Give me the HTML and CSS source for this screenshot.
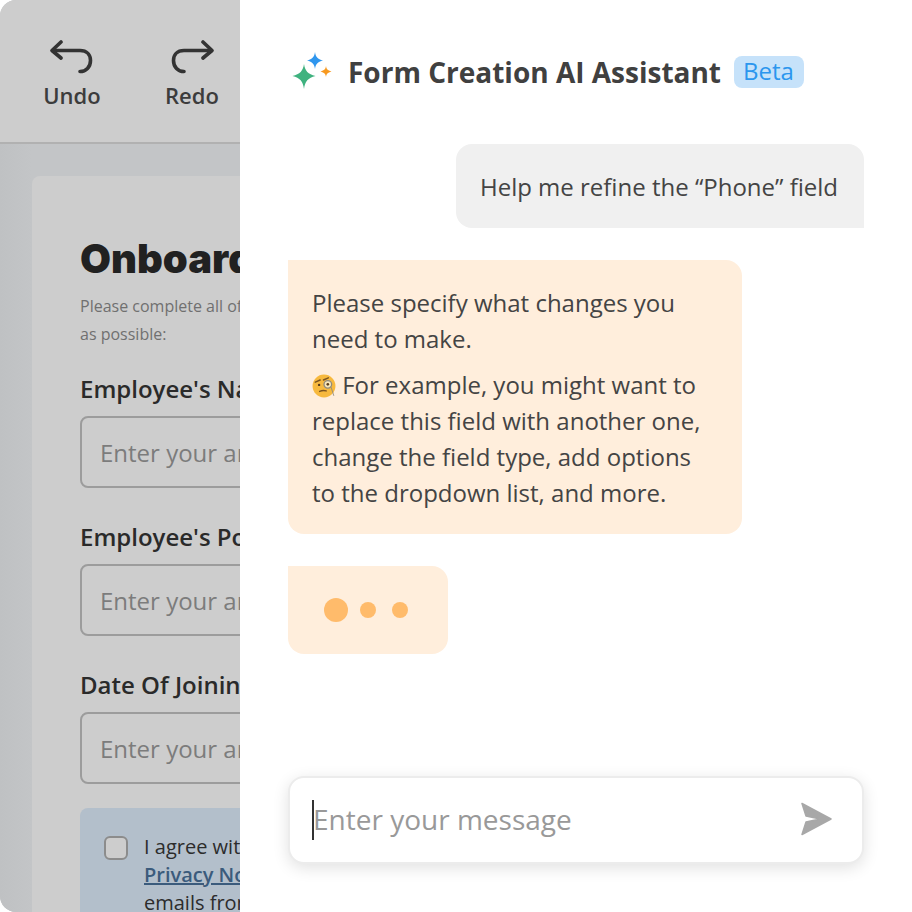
FILE: index.html
```html
<!DOCTYPE html>
<html>
<head>
  <meta charset="utf-8">
  <title>Form Creation AI Assistant</title>
  <link rel="stylesheet" href="styles.css">
</head>
<body>
  <div class="frame">
    <div class="builder">
      <div class="toolbar">
        <div class="tool">
          <svg width="44" height="36" viewBox="0 0 44 36" fill="none" stroke="#333" stroke-width="3.6" stroke-linecap="round" stroke-linejoin="round"><path d="M11 2 L2 10.5 L11 18"/><path d="M3 10.5 H30 C37 10.5 40.5 15 40.5 20.5 C40.5 27 36 31.5 30 31.5"/></svg>
          <span>Undo</span>
        </div>
        <div class="tool">
          <svg width="44" height="36" viewBox="0 0 44 36" fill="none" stroke="#333" stroke-width="3.6" stroke-linecap="round" stroke-linejoin="round"><path d="M33 2 L42 10.5 L33 18"/><path d="M41 10.5 H14 C7 10.5 3.5 15 3.5 20.5 C3.5 27 8 31.5 14 31.5"/></svg>
          <span>Redo</span>
        </div>
      </div>
      <div class="form-area">
        <div class="form-card">
          <h1>Onboarding</h1>
          <p class="intro">Please complete all of the<br>as possible:</p>
          <div class="field">
            <label>Employee's Name</label>
            <div class="input">Enter your answer</div>
          </div>
          <div class="field">
            <label>Employee's Position</label>
            <div class="input">Enter your answer</div>
          </div>
          <div class="field">
            <label>Date Of Joining</label>
            <div class="input">Enter your answer</div>
          </div>
          <div class="consent">
            <span class="check"></span>
            <div class="consent-text">I agree with the<br><a href="#">Privacy Notice</a><br>emails from the</div>
          </div>
        </div>
      </div>
    </div>
    <div class="assistant">
      <div class="head">
        <svg class="sparkle" width="42" height="42" viewBox="0 0 42 42"><path fill="#3fb27f" d="M13 13 C14 20 17 23 24.5 25 C17 27 14 30 13 38 C12 30 9 27 1.5 25 C9 23 12 20 13 13Z"/><path fill="#2f96ee" d="M24 1 C24.7 6 26.5 8 32 9.500 C26.500 11 24.700 13 24 18 C23.300 13 21.500 11 16 9.500 C21.500 8 23.300 6 24 1Z"/><path fill="#f7991f" d="M35 15 C35.400 18 36.500 19.400 40.500 20.500 C36.500 21.600 35.400 23 35 26 C34.600 23 33.500 21.600 29.500 20.500 C33.500 19.400 34.600 18 35 15Z"/></svg>
        <h2>Form Creation AI Assistant</h2>
        <span class="beta">Beta</span>
      </div>
      <div class="chat">
        <div class="msg msg-user">Help me refine the “Phone” field</div>
        <div class="msg msg-bot">
          <p>Please specify what changes you need to make.</p>
          <p class="example"><svg class="emoji" width="24" height="24" viewBox="0 0 22 22"><circle cx="11" cy="11" r="10.500" fill="#f7b93e"/><path fill="none" stroke="#7a5320" stroke-width="1.300" stroke-linecap="round" d="M3 7.500 L7.500 5.500 M10.500 5.500 L15 3.500 M7 16 C9 15 11 14.800 13 15.500"/><circle cx="6.500" cy="10" r="1.100" fill="#5b3d18"/><circle cx="14.500" cy="9.500" r="3.500" fill="#f9e7b8" stroke="#8d8a80" stroke-width="1.200"/><circle cx="14.500" cy="9.500" r="1.200" fill="#5b3d18"/><path fill="none" stroke="#8d8a80" stroke-width=".8" d="M17.500 12 L20 20"/></svg> For example, you might want to replace this field with another one, change the field type, add options to the dropdown list, and more.</p>
        </div>
        <div class="msg msg-typing">
          <span class="dot dot-big"></span>
          <span class="dot"></span>
          <span class="dot"></span>
        </div>
      </div>
      <div class="composer">
        <span class="caret"></span>
        <span class="placeholder">Enter your message</span>
        <svg class="send" width="32" height="34" viewBox="0 0 32 34"><path fill="#a8a8a8" stroke="#a8a8a8" stroke-width="1.500" stroke-linejoin="round" d="M2 1.500 L31 17 L2 32.500 L6 20 L20 17 L6 14Z"/></svg>
      </div>
    </div>
  </div>
</body>
</html>
```

FILE: styles.css
```css
* { box-sizing: border-box; }
html, body { margin: 0; padding: 0; background: #fff; }
body { font-family: "Open Sans", "Noto Sans", sans-serif; color: #444; }

.frame { display: flex; width: 912px; height: 912px; overflow: hidden; }

/* dimmed form builder behind the panel */
.builder { width: 240px; height: 912px; flex: none; overflow: hidden; background: #c3c5c7; border-radius: 16px 0 0 16px; display: flex; flex-direction: column; }
.toolbar { height: 144px; flex: none; display: flex; padding: 40px 0 0 12px; background: #cdcdcd; border-bottom: 2px solid #b1b1b1; }
.tool { width: 120px; flex: none; display: flex; flex-direction: column; align-items: center; font-size: 22px; line-height: 30px; font-weight: 600; color: #3c3c3c; }
.tool svg { display: block; margin-bottom: 4px; }

.form-area { flex: 1; padding: 32px 0 0 32px; background: linear-gradient(90deg, #bfc1c3, #c3c5c7 32px); min-width: 0; }
.form-card { width: 560px; height: 800px; padding: 60px 48px 0; background: #cdcdcd; border-radius: 8px 8px 0 0; color: #242424; }
.form-card h1 { margin: 0; font-family: Inter, sans-serif; font-size: 40px; line-height: 46px; font-weight: 900; color: #212121; white-space: nowrap; }
.intro { margin: 10px 0 0; font-size: 16px; line-height: 28px; color: #707070; white-space: nowrap; }
.intro + .field { margin-top: 26px; }
.field + .field { margin-top: 34px; }
.field label { display: block; font-size: 24px; line-height: 30px; font-weight: 600; color: #2a2a2a; white-space: nowrap; }
.input { height: 72px; margin-top: 12px; padding: 0 18px; display: flex; align-items: center; border: 2px solid #9c9c9c; border-radius: 8px; font-size: 24px; color: #7c7c7c; white-space: nowrap; }
.consent { display: flex; gap: 16px; margin-top: 24px; padding: 12px 24px; height: 130px; background: #b3bfcb; border-radius: 8px; }
.check { width: 24px; height: 24px; margin-top: 16px; flex: none; border: 2px solid #8c8c8c; border-radius: 6px; background: #cdcdcd; }
.consent-text { font-size: 20px; line-height: 28px; padding-top: 13px; color: #2c2c2c; white-space: nowrap; }
.consent-text a { color: #3b5b7c; font-weight: 600; }

/* assistant panel */
.assistant { flex: 1; padding: 48px; background: #fff; display: flex; flex-direction: column; min-width: 0; }
.head { display: flex; align-items: center; height: 48px; }
.sparkle { flex: none; margin: 0 15px 0 3px; }
.head h2 { margin: 0; font-size: 28px; line-height: 48px; font-weight: 700; color: #404040; white-space: nowrap; }
.beta { margin-left: 13px; padding: 0 10px 0 9px; height: 32px; line-height: 30px; font-size: 24px; color: #2b96ee; background: #c6e2fa; border-radius: 8px; }

.chat { flex: 1; display: flex; flex-direction: column; align-items: flex-start; gap: 32px; padding-top: 48px; }
.msg { font-size: 24px; line-height: 36px; padding: 25px 24px 23px; color: #444; }
.msg-user { align-self: flex-end; height: 84px; padding-right: 26px; background: #f0f0f0; border-radius: 16px 16px 0 16px; white-space: nowrap; }
.msg-bot { width: 454px; background: #ffeedc; border-radius: 0 16px 16px 16px; }
.msg-bot p { margin: 0; }
.msg-bot .example { margin-top: 10px; }
.emoji { vertical-align: -4px; }
.msg-typing { width: 160px; height: 88px; padding: 0 36px; display: flex; align-items: center; gap: 16px; background: #ffeedc; border-radius: 0 16px 16px 16px; }
.dot { width: 16px; height: 16px; flex: none; border-radius: 50%; background: #ffbb6b; }
.dot-big { width: 24px; height: 24px; margin-right: -4px; }

.composer { height: 88px; display: flex; align-items: center; padding: 0 30px 0 22px; background: #fff; border: 2px solid #ececec; border-radius: 16px; box-shadow: 0 4px 16px rgba(0, 0, 0, .12); }
.caret { width: 2px; height: 40px; flex: none; background: #333; }
.placeholder { flex: 1; margin: -2px 0 0 -1px; font-size: 28px; line-height: 40px; color: #999; }
.send { flex: none; margin-top: -2px; }
```
